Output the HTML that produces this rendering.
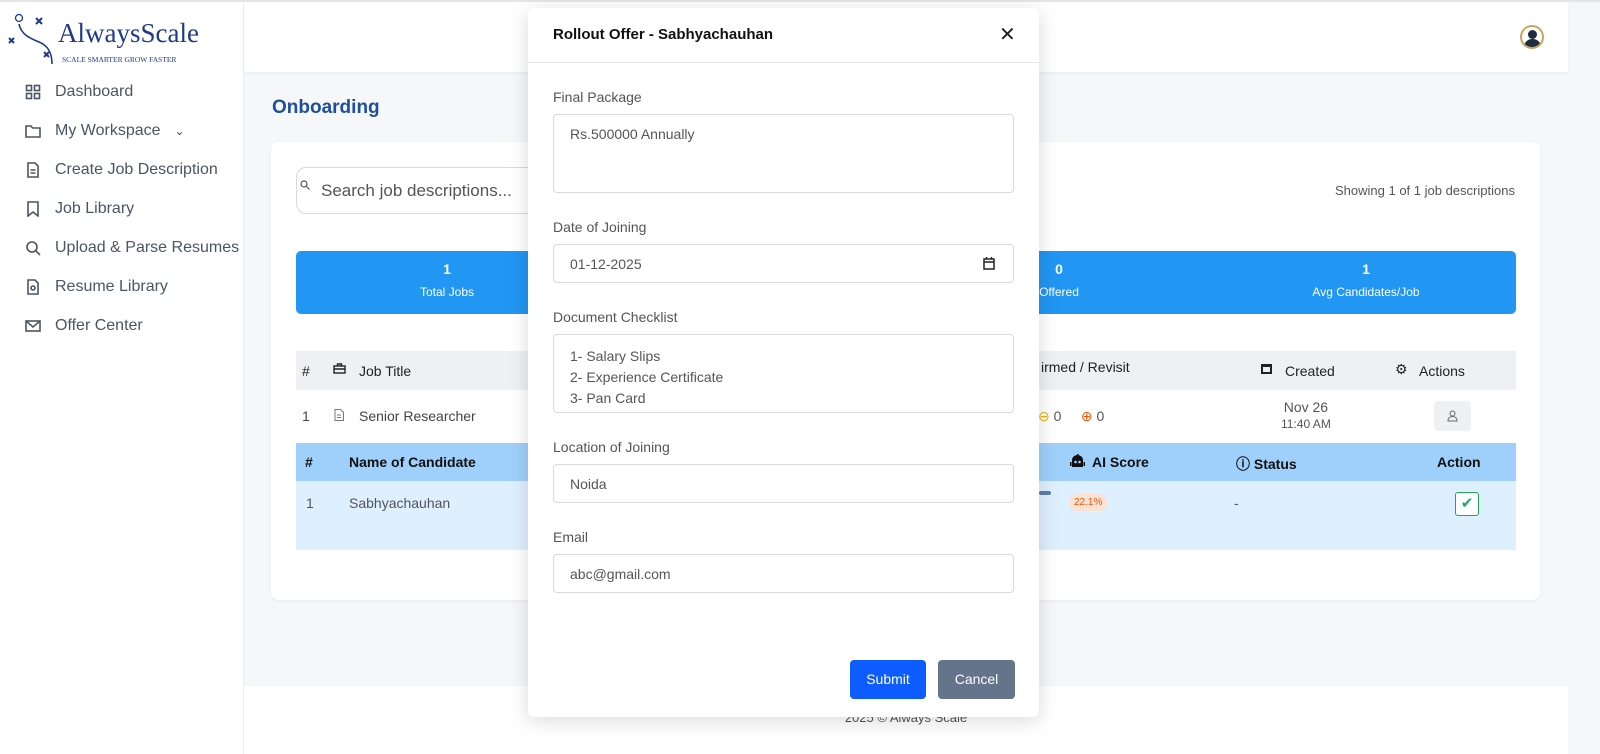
<!DOCTYPE html><html><head><style>
*{box-sizing:border-box;margin:0;padding:0}
body{width:1600px;height:754px;overflow:hidden;font-family:"Liberation Sans",Arial,sans-serif;background:#f6f7f9;position:relative;color:#333}
.top{position:absolute;left:0;top:0;width:1600px;height:2px;background:#e5e5e5}
.side{position:absolute;left:0;top:2px;width:244px;height:752px;background:#fff;border-right:1px solid #eee}
.nav{position:absolute;left:25px;font-size:16px;color:#4b5563;display:flex;align-items:center}
.nav svg{width:16px;height:16px;margin-right:14px;stroke:#4b5563;fill:none;stroke-width:1.6}
.hdr{position:absolute;left:244px;top:2px;width:1324px;height:70px;background:#fff;box-shadow:0 1px 3px rgba(0,0,0,.05)}
.foot{position:absolute;left:244px;top:686px;width:1324px;height:68px;background:#fff;text-align:center;font-size:13px;color:#555;padding-top:24px}
.card{position:absolute;left:271px;top:142px;width:1269px;height:458px;background:#fff;border-radius:8px;box-shadow:0 1px 3px rgba(0,0,0,.06)}
.abs{position:absolute}
.modal{position:absolute;left:528px;top:8px;width:511px;height:709px;background:#fff;border-radius:6px;box-shadow:0 4px 20px rgba(0,0,0,.15)}
.lbl{position:absolute;left:25px;font-size:14px;color:#555}
.inp{position:absolute;left:25px;width:461px;border:1px solid #d6d9de;border-radius:4px;font-size:14px;color:#555;padding:0 16px}
</style></head><body>
<div class="top"></div>
<div class="side">
<svg class="abs" style="left:6px;top:10px" width="50" height="52" viewBox="0 0 50 52" fill="none" stroke="#1e3a8a" stroke-width="2"><circle cx="13" cy="6" r="3.5" stroke-width="1.3"/><path d="M30 6l6 6M36 6l-6 6M3 26l5 5M8 26l-5 5M38 40l5 5M43 40l-5 5"/><path d="M13 12c2 10 10 14 20 18c10 4 13 12 13 22" stroke-width="1.6"/></svg>
<div class="abs" style="left:58px;top:16px;font-family:'Liberation Serif',serif;font-size:27px;color:#1e3a8a">AlwaysScale</div>
<div class="abs" style="left:62px;top:53px;font-family:'Liberation Serif',serif;font-size:7.5px;color:#1e3a8a">SCALE SMARTER GROW FASTER</div>
<div class="nav" style="top:81px"><svg viewBox="0 0 16 16"><rect x="1.5" y="1.5" width="5" height="5"/><rect x="9.5" y="1.5" width="5" height="5"/><rect x="1.5" y="9.5" width="5" height="5"/><rect x="9.5" y="9.5" width="5" height="5"/></svg>Dashboard</div>
<div class="nav" style="top:120px"><svg viewBox="0 0 16 16"><path d="M1 3h5l1.5 2H15v9H1z"/></svg>My Workspace <span style="margin-left:14px;font-size:12px">⌄</span></div>
<div class="nav" style="top:159px"><svg viewBox="0 0 16 16"><path d="M3 1h7l3 3v11H3zM5.5 8h5M5.5 11h5"/></svg>Create Job Description</div>
<div class="nav" style="top:198px"><svg viewBox="0 0 16 16"><path d="M3 1h10v14l-5-4-5 4z"/></svg>Job Library</div>
<div class="nav" style="top:237px"><svg viewBox="0 0 16 16"><circle cx="7" cy="7" r="5"/><path d="M11 11l4 4"/></svg>Upload &amp; Parse Resumes</div>
<div class="nav" style="top:276px"><svg viewBox="0 0 16 16"><path d="M3 1h7l3 3v11H3z"/><circle cx="8" cy="9" r="2"/></svg>Resume Library</div>
<div class="nav" style="top:315px"><svg viewBox="0 0 16 16"><rect x="1" y="3" width="14" height="10"/><path d="M1 3l7 6 7-6"/></svg>Offer Center</div>
</div>
<div class="hdr"><div class="abs" style="left:1276px;top:23px;width:24px;height:24px;border-radius:50%;border:2px solid #c9a55c;background:#fff;overflow:hidden"><div class="abs" style="left:6px;top:3px;width:9px;height:9px;border-radius:50%;background:#1f2d3d"></div><div class="abs" style="left:2px;top:12px;width:17px;height:12px;border-radius:8px 8px 0 0;background:#1f2d3d"></div></div></div>
<div class="abs" style="left:272px;top:97px;font-size:19px;font-weight:bold;color:#1e4f9c">Onboarding</div>
<div class="card">
<div class="abs" style="left:25px;top:25px;width:300px;height:47px;border:1px solid #d6d9de;border-radius:10px"></div>
<svg class="abs" style="left:29px;top:38px" width="10" height="10" viewBox="0 0 10 10" fill="none" stroke="#555" stroke-width="1.2"><circle cx="4" cy="4" r="3"/><path d="M6.5 6.5l3 3"/></svg>
<div class="abs" style="left:50px;top:39px;font-size:17px;color:#555">Search job descriptions...</div>
<div class="abs" style="left:1064px;top:41px;font-size:13px;color:#555">Showing 1 of 1 job descriptions</div>
<div class="abs" style="left:25px;top:109px;width:1220px;height:63px;background:#2196f3;border-radius:5px;color:#fff;text-align:center;font-size:12px">
<div class="abs" style="left:0;width:302px;top:10px"><b style="font-size:14px">1</b><br><div style="margin-top:8px">Total Jobs</div></div>
<div class="abs" style="left:693px;width:140px;top:10px"><b style="font-size:14px">0</b><br><div style="margin-top:8px">Offered</div></div>
<div class="abs" style="left:996px;width:148px;top:10px"><b style="font-size:14px">1</b><br><div style="margin-top:8px">Avg Candidates/Job</div></div>
</div>
<div class="abs" style="left:25px;top:209px;width:1220px;height:39px;background:#eef0f4;font-size:14px;color:#222">
<span class="abs" style="left:6px;top:12px">#</span>
<svg class="abs" style="left:37px;top:12px" width="13" height="11" viewBox="0 0 13 11" fill="none" stroke="#222" stroke-width="1.4"><rect x="1" y="3" width="11" height="7"/><path d="M4.5 3V1h4v2M1 6h11"/></svg>
<span class="abs" style="left:63px;top:12px">Job Title</span>
<span class="abs" style="left:745px;top:8px">irmed / Revisit</span>
<svg class="abs" style="left:965px;top:12px" width="11" height="11" viewBox="0 0 11 11"><rect x="0" y="1" width="11" height="10" fill="#222"/><rect x="2" y="4" width="7" height="5" fill="#eee"/></svg>
<span class="abs" style="left:989px;top:12px">Created</span><span class="abs" style="left:1099px;top:10px">⚙</span><span class="abs" style="left:1123px;top:12px">Actions</span></div>
<div class="abs" style="left:31px;top:266px;font-size:14px;color:#444">1</div>
<svg class="abs" style="left:63px;top:267px" width="10" height="12" viewBox="0 0 10 12" fill="none" stroke="#777" stroke-width="1"><path d="M1 .5h5.5l3 3v8H1zM3 6h4M3 8.5h4"/></svg>
<div class="abs" style="left:88px;top:266px;font-size:14px;color:#444">Senior Researcher</div>
<div class="abs" style="left:767px;top:266px;font-size:14px;color:#555"><span style="color:#eab308">⊖</span> 0 &nbsp;&nbsp;&nbsp; <span style="color:#ea580c">⊕</span> 0</div>
<div class="abs" style="left:1010px;top:257px;font-size:14px;color:#555;text-align:center">Nov 26<br><span style="font-size:12px">11:40 AM</span></div>
<div class="abs" style="left:1163px;top:259px;width:37px;height:30px;background:#eef0f4;border-radius:4px"><svg class="abs" style="left:13px;top:9px" width="11" height="12" viewBox="0 0 11 12" fill="none" stroke="#666" stroke-width="1"><circle cx="5.5" cy="3.5" r="2.5"/><path d="M1 11c0-3 2-4.5 4.5-4.5S10 8 10 11z"/></svg></div>
<div class="abs" style="left:25px;top:301px;width:1220px;height:38px;background:#9fd0fb;font-size:14px;font-weight:bold;color:#111">
<span class="abs" style="left:9px;top:11px">#</span><span class="abs" style="left:53px;top:11px">Name of Candidate</span>
<svg class="abs" style="left:774px;top:11px" width="15" height="14" viewBox="0 0 15 14"><rect x="7" y="0" width="1.5" height="4" fill="#111"/><path d="M2 6a5.5 5 0 0 1 11 0v7H2z" fill="#111"/><circle cx="5.5" cy="8" r="1.3" fill="#9fd0fb"/><circle cx="9.5" cy="8" r="1.3" fill="#9fd0fb"/><rect x="0" y="8" width="1.5" height="4" fill="#111"/><rect x="13.5" y="8" width="1.5" height="4" fill="#111"/></svg>
<span class="abs" style="left:796px;top:11px">AI Score</span><span class="abs" style="left:940px;top:11px">ⓘ Status</span><span class="abs" style="left:1141px;top:11px">Action</span></div>
<div class="abs" style="left:25px;top:339px;width:1220px;height:69px;background:#deeffd;font-size:14px;color:#555">
<span class="abs" style="left:10px;top:14px">1</span><span class="abs" style="left:53px;top:14px">Sabhyachauhan</span>
<span class="abs" style="left:743px;top:10px;width:12px;height:4px;background:#5b7fa6;border-radius:2px"></span>
<span class="abs" style="left:773px;top:13px;background:#fde2d4;color:#ea580c;font-size:10px;padding:3px 5px;border-radius:8px">22.1%</span>
<span class="abs" style="left:938px;top:14px">-</span>
<span class="abs" style="left:1159px;top:11px;width:24px;height:24px;border:1.5px solid #22a55a;border-radius:3px;background:#fff;color:#22a55a;text-align:center;font-size:15px;line-height:21px">✔</span></div>
</div>
<div class="foot">2025 © Always Scale</div>
<div class="modal">
<div class="abs" style="left:25px;top:18px;font-size:15px;font-weight:bold;color:#111">Rollout Offer - Sabhyachauhan</div>
<div class="abs" style="left:471px;top:14px;font-size:20px;color:#222">✕</div>
<div class="abs" style="left:0;top:54px;width:511px;height:1px;background:#e8e8e8"></div>
<div class="lbl" style="top:81px">Final Package</div>
<div class="inp" style="top:106px;height:79px;padding-top:11px">Rs.500000 Annually</div>
<div class="lbl" style="top:211px">Date of Joining</div>
<div class="inp" style="top:236px;height:39px;padding-top:11px">01-12-2025<svg style="position:absolute;right:18px;top:12px" width="12" height="13" viewBox="0 0 12 13" fill="none" stroke="#222" stroke-width="1.5"><rect x="1" y="2" width="10" height="10"/><path d="M1 5h10M3.5 0v2.5M8.5 0v2.5"/></svg></div>
<div class="lbl" style="top:301px">Document Checklist</div>
<div class="inp" style="top:326px;height:79px;padding-top:11px;line-height:21px">1- Salary Slips<br>2- Experience Certificate<br>3- Pan Card</div>
<div class="lbl" style="top:431px">Location of Joining</div>
<div class="inp" style="top:456px;height:39px;padding-top:11px">Noida</div>
<div class="lbl" style="top:521px">Email</div>
<div class="inp" style="top:546px;height:39px;padding-top:11px">abc@gmail.com</div>
<div class="abs" style="left:322px;top:652px;width:76px;height:39px;background:#0d5cff;border-radius:4px;color:#fff;font-size:14px;text-align:center;line-height:39px">Submit</div>
<div class="abs" style="left:410px;top:652px;width:77px;height:39px;background:#64748b;border-radius:4px;color:#fff;font-size:14px;text-align:center;line-height:39px">Cancel</div>
</div>
</body></html>
